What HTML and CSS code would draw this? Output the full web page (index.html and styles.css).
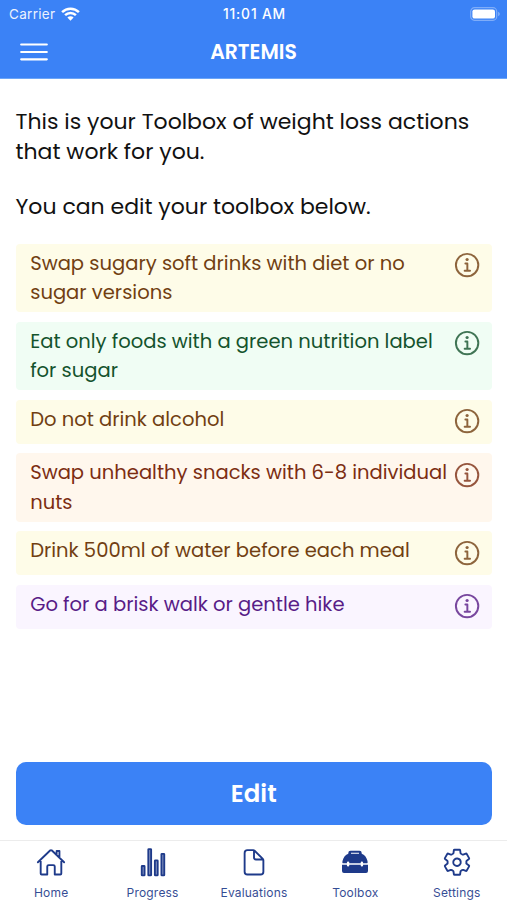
FILE: index.html
```html
<!DOCTYPE html>
<html lang="en">
<head>
<meta charset="utf-8">
<title>ARTEMIS</title>
<link rel="stylesheet" href="styles.css">
</head>
<body>
<svg class="defs" aria-hidden="true">
  <symbol id="info" viewBox="0 0 512 512">
    <path d="M248 64C146.39 64 64 146.39 64 248s82.39 184 184 184 184-82.39 184-184S349.61 64 248 64z" fill="none" stroke="currentColor" stroke-width="32"/>
    <path d="M220 220h32v116M208 340h88" fill="none" stroke="currentColor" stroke-width="32" stroke-linecap="round" stroke-linejoin="round"/>
    <path d="M248 130a26 26 0 1026 26 26 26 0 00-26-26z" fill="currentColor"/>
  </symbol>
</svg>
<div class="app">
  <header class="header">
    <div class="status">
      <div class="carrier"><span class="carrier-name">Carrier</span>
        <svg class="wifi" viewBox="0 0 19 14"><path d="M1.1 5.1a12 12 0 0 1 16.8 0M4.1 8.1a7.7 7.7 0 0 1 10.8 0" fill="none" stroke="currentColor" stroke-width="2.5"/><path d="M6.4 10.5a4.4 4.4 0 0 1 6.2 0L9.5 13.8z" fill="currentColor"/></svg>
      </div>
      <span class="clock">11:01 AM</span>
      <svg class="battery" viewBox="0 0 30 14"><rect x=".7" y=".7" width="26" height="12.6" rx="3.8" fill="none" stroke="#fff" stroke-opacity=".35" stroke-width="1.2"/><rect x="2.4" y="2.4" width="22.6" height="9.2" rx="2.2" fill="#fff"/><path d="M28.2 4.8c2 .8 2 3.6 0 4.4z" fill="#fff" opacity=".4"/></svg>
    </div>
    <div class="bar">
      <svg class="menu" viewBox="0 0 28 20"><path d="M1.200 2.500h25.600M1.200 10h25.600M1.200 17.300h25.600" fill="none" stroke="#fff" stroke-width="2.200" stroke-linecap="round"/></svg>
      <h1 class="title">ARTEMIS</h1>
      <span></span>
    </div>
  </header>
  <main class="main">
    <p class="intro">This is your Toolbox of weight loss actions<br>that work for you.</p>
    <p class="intro">You can edit your toolbox below.</p>
    <ul class="list">
      <li class="item yellow"><p class="text">Swap sugary soft drinks with diet or no<br>sugar versions</p><svg class="info"><use href="#info"/></svg></li>
      <li class="item green"><p class="text">Eat only foods with a green nutrition label<br>for sugar</p><svg class="info"><use href="#info"/></svg></li>
      <li class="item yellow"><p class="text">Do not drink alcohol</p><svg class="info"><use href="#info"/></svg></li>
      <li class="item orange"><p class="text">Swap unhealthy snacks with 6-8 individual<br>nuts</p><svg class="info"><use href="#info"/></svg></li>
      <li class="item yellow"><p class="text">Drink 500ml of water before each meal</p><svg class="info"><use href="#info"/></svg></li>
      <li class="item purple"><p class="text">Go for a brisk walk or gentle hike</p><svg class="info"><use href="#info"/></svg></li>
    </ul>
    <button class="edit">Edit</button>
  </main>
  <nav class="tabs">
    <a class="tab"><svg class="icon" viewBox="0 0 512 512"><path d="M80 212v236a16 16 0 0016 16h96V328a24 24 0 0124-24h80a24 24 0 0124 24v136h96a16 16 0 0016-16V212M480 256L266.89 52c-5-5.28-16.69-5.34-21.78 0L32 256M400 179V64h-48v69"/></svg><span class="label">Home</span></a>
    <a class="tab"><svg class="icon bars" viewBox="0 0 512 512"><rect x="64" y="320" width="48" height="160" rx="8"/><rect x="288" y="224" width="48" height="256" rx="8"/><rect x="400" y="112" width="48" height="368" rx="8"/><rect x="176" y="32" width="48" height="448" rx="8"/></svg><span class="label">Progress</span></a>
    <a class="tab"><svg class="icon" viewBox="0 0 512 512"><path d="M416 221.25V416a48 48 0 01-48 48H144a48 48 0 01-48-48V96a48 48 0 0148-48h98.75a32 32 0 0122.62 9.37l141.26 141.26a32 32 0 019.37 22.62zM256 56v120a32 32 0 0032 32h120"/></svg><span class="label">Evaluations</span></a>
    <a class="tab"><svg class="icon solid" viewBox="0 0 30 30"><path fill-rule="evenodd" d="M10.500 3.500h9a2.200 2.200 0 0 1 2.200 2.200v.7c2.800.8 4.900 3.600 5.800 7.300q.4 1.700-.2 2.300h-4.200v-.5a1.200 1.200 0 0 0-2.400 0v.5H9.300v-.5a1.200 1.200 0 0 0-2.400 0v.5H2.700q-.6-.6-.2-2.300c.9-3.700 3-6.500 5.800-7.300v-.7a2.200 2.200 0 0 1 2.200-2.200zm.5 2v1h8v-1z"/><path d="M2 17.600h4.900v.4a1.200 1.200 0 0 0 2.400 0v-.4h11.400v.4a1.200 1.200 0 0 0 2.400 0v-.4H28v6.100a2 2 0 0 1-2 2H4a2 2 0 0 1-2-2z"/></svg><span class="label">Toolbox</span></a>
    <a class="tab"><svg class="icon" viewBox="0 0 512 512"><path d="M262.29 192.31a64 64 0 1057.4 57.4 64.13 64.13 0 00-57.4-57.4zM416.39 256a154.34 154.34 0 01-1.53 20.79l45.21 35.46a10.81 10.81 0 012.45 13.75l-42.77 74a10.81 10.81 0 01-13.14 4.59l-44.9-18.08a16.11 16.11 0 00-15.17 1.75A164.48 164.48 0 01325 400.8a15.94 15.94 0 00-8.82 12.14l-6.73 47.89a11.08 11.08 0 01-10.68 9.17h-85.54a11.11 11.11 0 01-10.69-8.87l-6.72-47.82a16.07 16.07 0 00-9-12.22 155.3 155.3 0 01-21.46-12.57 16 16 0 00-15.11-1.71l-44.89 18.07a10.81 10.81 0 01-13.14-4.58l-42.77-74a10.8 10.8 0 012.45-13.75l38.21-30a16.05 16.05 0 006-14.08c-.36-4.17-.58-8.33-.58-12.5s.21-8.27.58-12.35a16 16 0 00-6.07-13.94l-38.19-30A10.81 10.81 0 0149.48 186l42.77-74a10.81 10.81 0 0113.14-4.59l44.9 18.08a16.11 16.11 0 0015.17-1.75A164.48 164.48 0 01187 111.2a15.94 15.94 0 008.82-12.14l6.73-47.89A11.08 11.08 0 01213.23 42h85.54a11.11 11.11 0 0110.69 8.87l6.72 47.82a16.07 16.07 0 009 12.22 155.3 155.3 0 0121.46 12.57 16 16 0 0015.11 1.71l44.89-18.07a10.81 10.81 0 0113.14 4.58l42.77 74a10.8 10.8 0 01-2.45 13.75l-38.21 30a16.05 16.05 0 00-6.05 14.08c.33 4.14.55 8.3.55 12.47z"/></svg><span class="label">Settings</span></a>
  </nav>
</div>
</body>
</html>
```
FILE: styles.css
```css
* { box-sizing: border-box; }
body { margin: 0; background: #fff; font-family: Poppins, Inter, "Open Sans", sans-serif; }
p, h1, ul { margin: 0; padding: 0; }
.defs { position: absolute; width: 0; height: 0; }
.app { width: 507px; height: 900px; display: flex; flex-direction: column; overflow: hidden; }
.header { height: 79px; background: #3b82f6; color: #fff; border-bottom: 1px solid #6ba5f8; }
.status { height: 26px; padding: 1px 7px 0 9px; display: grid; grid-template-columns: 1fr auto 1fr; align-items: center; font: 500 13.500px/26px Inter, sans-serif; }
.carrier { display: flex; align-items: center; gap: 5.500px; }
.carrier-name { font-weight: 400; opacity: .9; letter-spacing: .3px; }
.wifi { width: 19px; height: 14px; }
.clock { font-weight: 500; font-size: 13.800px; letter-spacing: .85px; }
.battery { width: 30px; height: 14px; justify-self: end; }
.bar { height: 52px; padding: 0 20px; display: grid; grid-template-columns: 1fr auto 1fr; align-items: center; }
.menu { width: 28px; height: 20px; }
.title { font-size: 20.400px; line-height: 52px; font-weight: 600; }
.main { flex: 1; display: flex; flex-direction: column; padding: 28px 15px 15px 15.500px; }
.intro { font-size: 22px; line-height: 30px; color: #111; margin-bottom: 25px; white-space: nowrap; }
.list { list-style: none; display: flex; flex-direction: column; gap: 9.750px; margin-top: -3px; }
.item { min-height: 43.800px; display: flex; justify-content: space-between; border-radius: 4px; padding: 4.800px 9.200px 4.800px 14.700px; }
.text { font-size: 19.550px; line-height: 29.300px; white-space: nowrap; }
.info { width: 31.200px; height: 31.200px; flex: none; margin-top: 1.400px; margin-left: -10px; opacity: .8; }
.yellow { background: #fefce8; color: #713f12; }
.green { background: #f0fdf4; color: #14532d; }
.orange { background: #fff7ed; color: #7c2d12; }
.purple { background: #faf5ff; color: #581c87; }
.edit { margin-top: auto; height: 63.500px; border: 0; border-radius: 10px; background: #3b82f6; color: #fff; font: 600 24.400px/63px Poppins, Inter, sans-serif; padding: 0; }
.tabs { height: 60px; border-top: 1px solid #ececec; display: grid; grid-template-columns: repeat(5, 1fr); }
.tab { display: flex; flex-direction: column; align-items: center; padding: 6px 0 0 1px; color: #1e3a8a; font: 400 12px/16px Inter, sans-serif; }
.label { margin-top: 7.500px; letter-spacing: .2px; opacity: .9; }
.icon { width: 30px; height: 30.500px; fill: none; stroke: currentColor; stroke-width: 32; stroke-linecap: round; stroke-linejoin: round; }
.bars { fill: #8e9cc5; }
.solid { fill: currentColor; stroke: none; }
```
